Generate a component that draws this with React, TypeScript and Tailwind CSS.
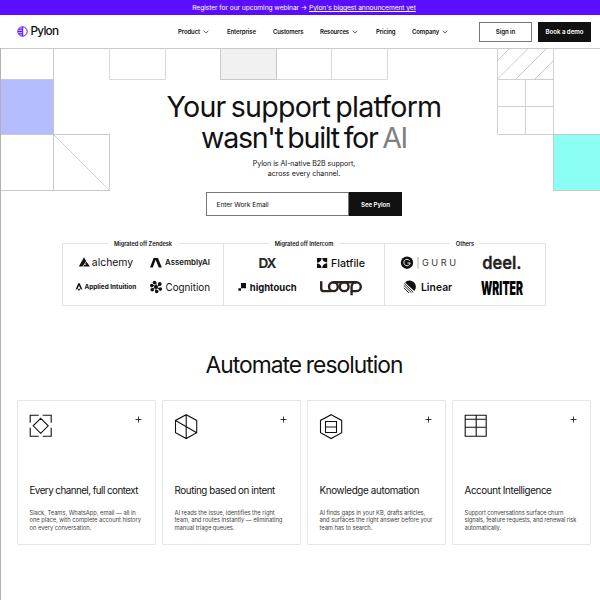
import type { ReactNode } from "react";

function Backdrop() {
  return (
    <svg className="absolute left-0 top-0 h-[552px] w-[600px]" viewBox="0 48 600 552" fill="none" stroke="#c9c9c9" strokeWidth="1" aria-hidden="true">
      <rect x="0" y="79" width="53" height="55" fill="#b3bdff" stroke="none" />
      <path d="M53.5 48V190M1 79.5H53M1 134.5H109.5M1 190.5H109.5M109.5 134V191" />
      <path d="M53.5 134.5L109.5 190.5" strokeWidth="0.8" />
      <path d="M109.5 48V79.5H165.5V48" stroke="#d8d8d8" />
      <rect x="220.5" y="48.5" width="56" height="31" fill="#f1f1f1" />
      <path d="M276.5 79.5H387.5M331.5 48V79.5M387.5 48V79.5" stroke="#d8d8d8" />
      <path d="M497.5 48V134.5H553.5M553.5 48V134M497.5 79.5H553.5M497.5 106.5H553.5M525.5 79.5V134.5" stroke="#d0d0d0" />
      <path d="M497.5 60.5L509.5 48.5M497.5 79L528.5 48M516 79L547 48M535 79L553.5 60.5" strokeWidth="0.8" stroke="#bdbdbd" />
      <path d="M553.5 134.5H600" stroke="#d0d0d0" />
      <rect x="553.5" y="134.5" width="50" height="56" fill="#8cfff5" />
      <path d="M0.5 48V600" stroke="#b5b0b3" />
    </svg>
  );
}

function Chevron() {
  return (
    <svg className="ml-[3px] h-[4px] w-[6px]" viewBox="0 0 6 4" fill="none" stroke="#222" strokeWidth="0.7">
      <path d="M0.7 0.7L3 3.1L5.3 0.7" />
    </svg>
  );
}

function NavItem({ label, menu, className }: { label: string; menu?: boolean; className: string }) {
  return (
    <a className={`flex shrink-0 items-center whitespace-nowrap ${className}`}>
      {label}
      {menu && <Chevron />}
    </a>
  );
}

function Logo({ children }: { children: ReactNode }) {
  return (
    <svg className="h-[24px] w-[74px] overflow-visible" viewBox="-5 -2 74 24" fill="#111" fontFamily="Inter, sans-serif">
      {children}
    </svg>
  );
}

const zendesk = (
  <>
    <Logo>
      <path d="M10 4.3L12.2 8.2L8.4 13.6H4.8ZM12.4 8.7L16 13.6H9.2L10.4 11.8H12.2L11.2 10.4Z" />
      <text x="17.8" y="13.4" fontSize="10.4" textLength="41.4" lengthAdjust="spacingAndGlyphs">alchemy</text>
    </Logo>
    <Logo>
      <path d="M5.6 5H10L13.8 14.4H10.8L7.6 6.7L4.8 14.4H2Z" />
      <text x="17" y="11.8" fontSize="7.4" fontWeight="600" textLength="45" lengthAdjust="spacingAndGlyphs">AssemblyAI</text>
    </Logo>
    <Logo>
      <path d="M4.3 6.2H5.7L8.4 12.5L6.6 12.2L5 8.6L3.4 12.2L1.6 12.5ZM5 11.3L6.1 12.7L5 13.7L3.9 12.7Z" />
      <text x="10.4" y="12.2" fontSize="6.4" fontWeight="700" textLength="51.8" lengthAdjust="spacingAndGlyphs">Applied Intuition</text>
    </Logo>
    <Logo>
      <path d="M8 5.5V14.5M4 7.8L12 12.2M4 12.2L12 7.8" stroke="#111" strokeWidth="1" />
      <circle cx="8" cy="10" r="1.9" />
      <circle cx="6.5" cy="5.6" r="1.8" />
      <circle cx="11.8" cy="7" r="1.9" />
      <circle cx="3.8" cy="8.6" r="1.8" />
      <circle cx="4.2" cy="12.8" r="1.8" />
      <circle cx="8.7" cy="14.5" r="1.8" />
      <circle cx="12.3" cy="12.1" r="1.8" />
      <text x="17.5" y="14" fontSize="10.4" textLength="44.5" lengthAdjust="spacingAndGlyphs">Cognition</text>
    </Logo>
  </>
);

const intercom = (
  <>
    <Logo>
      <text x="23.6" y="15.4" fontSize="13" fontWeight="700" letterSpacing="-1" textLength="17" lengthAdjust="spacingAndGlyphs" fill="#2a2a2a">DX</text>
    </Logo>
    <Logo>
      <path d="M8 5H18.2V15H8ZM8 9.8V10.4Q12 10.4 12.6 15H13.2Q13.2 11 18.2 10V9.4Q13.8 9.4 13.2 5H12.6Q12.6 9 8 9.8Z" fillRule="evenodd" />
      <text x="22" y="14" fontSize="10.2" fontWeight="500" textLength="34" lengthAdjust="spacingAndGlyphs">Flatfile</text>
    </Logo>
    <Logo>
      <path d="M6 6H11V11.2H6ZM3.4 11.2H6V13.8H3.4Z" />
      <text x="14.8" y="13.8" fontSize="9.5" fontWeight="700" textLength="46.8" lengthAdjust="spacingAndGlyphs">hightouch</text>
    </Logo>
    <Logo>
      <g fill="none" stroke="#2b2320" strokeWidth="2.4">
        <path d="M12.2 4.2V11.4Q12.2 14.1 15 14.1H22M24 5.3H47" />
        <circle cx="24.4" cy="9.7" r="4.4" />
        <circle cx="35.2" cy="9.7" r="4.4" />
        <path d="M42.6 18.2V9.7A4.6 4.4 0 1 1 47.2 14.1H43" />
      </g>
    </Logo>
  </>
);

const others = (
  <>
    <Logo>
      <circle cx="11" cy="9.7" r="6.2" />
      <path d="M13.6 7.6A3.2 3.2 0 1 0 14.2 10H11.4" fill="none" stroke="#fff" strokeWidth="0.9" />
      <path d="M22 3.8V15.8" stroke="#999" strokeWidth="0.8" />
      <text x="26" y="13.2" fontSize="9.2" textLength="34" fill="#333">GURU</text>
    </Logo>
    <Logo>
      <text x="12.2" y="15.8" fontSize="17.4" fontWeight="600" textLength="39.4" lengthAdjust="spacingAndGlyphs" fill="#222" stroke="#222" strokeWidth="0.3">deel.</text>
    </Logo>
    <Logo>
      <path d="M9 5.4A6 6 0 1 1 18.2 14.1Z" />
      <path d="M8.2 6.4L17.2 15.3M7.7 8.2L15.6 15.9M7.8 10.8L13 16" stroke="#111" strokeWidth="0.9" />
      <text x="25" y="14.3" fontSize="10.8" fontWeight="600" textLength="31.2" lengthAdjust="spacingAndGlyphs">Linear</text>
    </Logo>
    <Logo>
      <text x="11" y="17.6" fontSize="18.6" fontWeight="900" textLength="42" lengthAdjust="spacingAndGlyphs" fill="#000">WRITER</text>
    </Logo>
  </>
);

function LogoGroup({ title, children, className }: { title: string; children: ReactNode; className: string }) {
  return (
    <section className={`relative h-[63px] border-y border-r border-[#e2e2e2] px-[6px] pt-[7px] ${className}`}>
      <h2 className="absolute -top-[5px] left-1/2 -translate-x-1/2 whitespace-nowrap bg-white px-[6px] text-[5.7px] font-semibold leading-[9px] tracking-[-0.05px]">
        {title}
      </h2>
      <div className="grid grid-cols-[74px_74px]">{children}</div>
    </section>
  );
}

function Card({ icon, title, titleClass, lines, textClass }: { icon: ReactNode; title: string; titleClass: string; lines: string[]; textClass: string }) {
  return (
    <article className="h-[145px] w-[139px] rounded-[1px] border border-[#e5e5e5] bg-white px-[11px] pt-[13px]">
      <div className="flex h-[71px] justify-between">
        <svg className="h-[26px] w-[24px]" viewBox="0.3 0.2 24 26" fill="none" stroke="#111" strokeWidth="1.1">
          {icon}
        </svg>
        <svg className="mr-[2px] mt-[1.5px] h-[7px] w-[7px]" viewBox="0 0 7 7" stroke="#222" strokeWidth="0.9">
          <path d="M3.5 0.5V6.5M0.5 3.5H6.5" />
        </svg>
      </div>
      <h3 className={`ml-[0.5px] whitespace-nowrap text-[9.8px] leading-[12px] ${titleClass}`}>{title}</h3>
      <p className={`ml-[0.5px] mt-[11.5px] whitespace-nowrap text-[5.8px] leading-[7.8px] text-[#444] ${textClass}`}>
        {lines.map((l) => (
          <span key={l} className="block">{l}</span>
        ))}
      </p>
    </article>
  );
}

export default function App() {
  return (
    <div className="h-[600px] w-[600px] overflow-hidden bg-white font-['Inter',sans-serif] text-[#111]">
      <div className="flex h-[15px] items-center justify-center whitespace-pre bg-[#5b0eff] pl-[8px] pt-[1px] text-[6.7px] leading-[14px] tracking-[-0.076px] text-white">
        Register for our upcoming webinar → <a className="underline underline-offset-1">Pylon's biggest announcement yet</a>
      </div>
      <header className="flex h-[34px] items-center border-b border-[#c9c9c9] bg-white pl-[17px]">
        <div className="-mt-px flex w-[161px] items-center">
          <svg className="h-[11px] w-[11px]" viewBox="0 0 11 11" fill="none" stroke="#5b0eff" strokeWidth="1">
            <circle cx="5.5" cy="5.5" r="4.7" />
            <path d="M5.7 0.8V10.2M5.5 3.2H1.6M5.5 5.5H0.8M5.5 7.8H1.6" />
            <path d="M5.5 1A4.6 4.6 0 0 0 5.5 10Z" fill="#5b0eff" fillOpacity="0.35" stroke="none" />
          </svg>
          <span className="ml-[2.5px] text-[11.8px] font-medium leading-[14px] tracking-[-0.75px]">Pylon</span>
        </div>
        <nav className="flex h-full w-[301px] items-center text-[6px] font-semibold">
          <NavItem label="Product" menu className="w-[49px] tracking-[-0.11px]" />
          <NavItem label="Enterprise" className="w-[46px] tracking-[-0.1px]" />
          <NavItem label="Customers" className="w-[47px] tracking-[-0.16px]" />
          <NavItem label="Resources" menu className="w-[56px] tracking-[-0.18px]" />
          <NavItem label="Pricing" className="w-[36px] tracking-[-0.15px]" />
          <NavItem label="Company" menu className="tracking-[-0.1px]" />
        </nav>
        <a className="flex h-[20px] w-[53px] items-center justify-center border border-[#777] text-[6.2px] font-semibold tracking-[-0.11px]">Sign in</a>
        <a className="ml-[6px] flex h-[20px] w-[53px] items-center justify-center bg-[#111] text-[6.2px] font-semibold tracking-[-0.07px] text-white">Book a demo</a>
      </header>
      <main className="relative -mt-px h-[552px]">
        <Backdrop />
        <div className="relative flex flex-col pt-[42.5px]">
          <h1 className="flex flex-col items-center whitespace-nowrap pl-[8px] text-[28.6px] leading-[31px] [word-spacing:-2px]">
            <span className="tracking-[-0.78px]">Your support platform</span>
            <span className="tracking-[-1.3px]">
              wasn't built for <span className="text-[#808080]">AI</span>
            </span>
          </h1>
          <p className="mt-[6px] pl-[8px] text-center text-[7.1px] leading-[10px] tracking-[-0.05px]">
            Pylon is AI-native B2B support,
            <br />
            across every channel.
          </p>
          <form className="ml-[206px] mt-[13.5px] flex h-[24px] w-[196px] text-[6.7px]">
            <label className="flex w-[143px] items-center border border-[#777] pl-[9.5px] pt-[2px] tracking-[-0.1px]">Enter Work Email</label>
            <button type="button" className="w-[53px] bg-[#111] pt-px text-[6.2px] font-semibold tracking-[-0.08px] text-white">See Pylon</button>
          </form>
          <div className="ml-[62px] mt-[27px] flex">
            <LogoGroup title="Migrated off Zendesk" className="w-[162px] border-l">{zendesk}</LogoGroup>
            <LogoGroup title="Migrated off Intercom" className="w-[161px]">{intercom}</LogoGroup>
            <LogoGroup title="Others" className="w-[161px]">{others}</LogoGroup>
          </div>
          <h2 className="mt-[45px] pl-[8px] text-center text-[22.8px] leading-[28px] tracking-[-0.96px] [word-spacing:-0.8px]">Automate resolution</h2>
          <div className="ml-[17px] mt-[21px] flex gap-[6px]">
            <Card
              icon={<path d="M1.5 9V1.5H10M14 1.5H22.5V9M22.5 14V22.5H14M10 22.5H1.5V14M12 4.5L19.5 12L12 19.5L4.5 12Z" />}
              title="Every channel, full context"
              titleClass="tracking-[-0.53px]"
              lines={["Slack, Teams, WhatsApp, email — all in", "one place, with complete account history", "on every conversation."]}
              textClass="tracking-[-0.03px]"
            />
            <Card
              icon={<path d="M12.5 0.9L23 6.6V18.9L12.5 24.8L1.8 18.9V6.6ZM12.5 0.9V24.8M1.8 6.6L23 18.9" />}
              title="Routing based on intent"
              titleClass="tracking-[-0.4px]"
              lines={["AI reads the issue, identifies the right", "team, and routes instantly — eliminating", "manual triage queues."]}
              textClass="tracking-[-0.04px]"
            />
            <Card
              icon={<path d="M12.5 0.9L23 6.6V18.9L12.5 24.8L1.8 18.9V6.6ZM6.8 7.7H17.8V18.7H6.8ZM6.8 13.2H17.8" />}
              title="Knowledge automation"
              titleClass="tracking-[-0.33px]"
              lines={["AI finds gaps in your KB, drafts articles,", "and surfaces the right answer before your", "team has to search."]}
              textClass="tracking-[-0.053px]"
            />
            <Card
              icon={<path d="M1.5 1.5H22.5V22.5H1.5ZM1.5 5.5H22.5M1.5 13.5H22.5M12.5 1.5V22.5" />}
              title="Account Intelligence"
              titleClass="tracking-[-0.38px]"
              lines={["Support conversations surface churn", "signals, feature requests, and renewal risk", "automatically."]}
              textClass="tracking-[-0.086px]"
            />
          </div>
        </div>
      </main>
    </div>
  );
}
